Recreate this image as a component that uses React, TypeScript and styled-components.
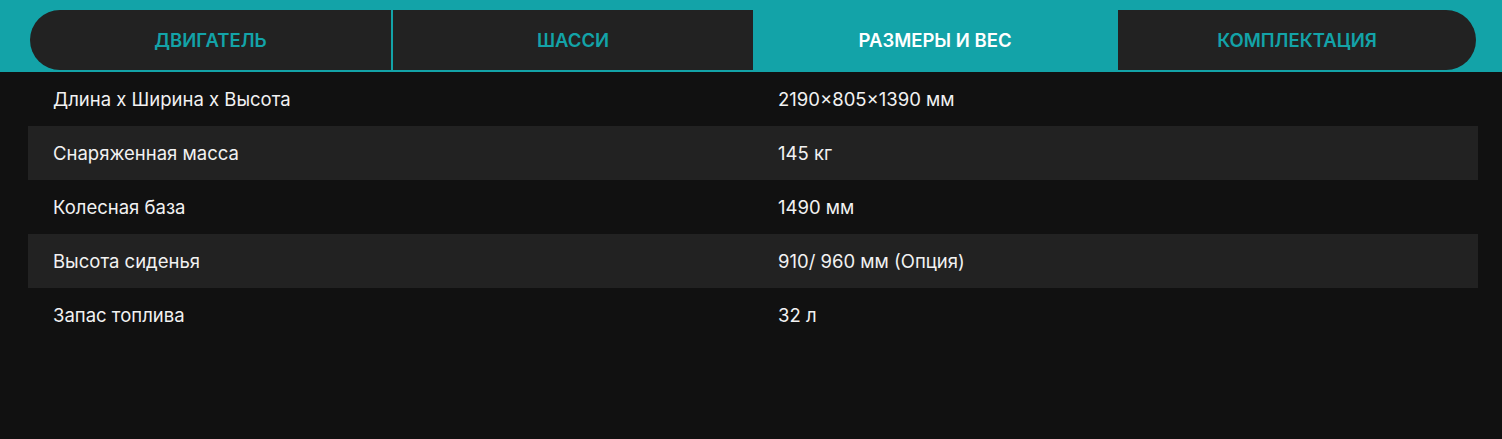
import React, { useState } from 'react';
import styled, { createGlobalStyle } from 'styled-components';

const GlobalStyle = createGlobalStyle`
  html, body {
    margin: 0;
    padding: 0;
    background: #111111;
  }
  body {
    font-family: Inter, Roboto, "Liberation Sans", sans-serif;
    -webkit-font-smoothing: antialiased;
  }
`;

const TEAL = '#13a3a8';

const Page = styled.div`
  width: 1502px;
  min-height: 439px;
  background: #111111;
`;

const TabBar = styled.div`
  background: ${TEAL};
  padding: 10px 26px 2px 30px;
`;

const Tabs = styled.div`
  display: grid;
  grid-template-columns: 361px 2px 360px 364px 1px 358px;
  height: 60px;
`;

const Sep = styled.div`
  background: ${TEAL};
`;

const Tab = styled.button<{ $active?: boolean; $first?: boolean; $last?: boolean }>`
  all: unset;
  box-sizing: border-box;
  display: flex;
  align-items: center;
  justify-content: center;
  cursor: pointer;
  background: ${p => (p.$active ? TEAL : '#222222')};
  color: ${p => (p.$active ? '#ffffff' : TEAL)};
  font-family: Inter, Roboto, "Liberation Sans", sans-serif;
  font-size: 18.5px;
  font-weight: 600;
  text-transform: uppercase;
  border-radius: ${p => (p.$first ? '30px 0 0 30px' : p.$last ? '0 30px 30px 0' : '0')};
`;

const Table = styled.div`
  padding: 0 24px 0 28px;
`;

const Row = styled.div<{ $striped: boolean }>`
  display: grid;
  grid-template-columns: 1fr 1fr;
  height: 54px;
  align-items: center;
  background: ${p => (p.$striped ? '#222222' : 'transparent')};
`;

const Cell = styled.div`
  padding-left: 25px;
  color: #f2f2f2;
  font-size: 18.5px;
  font-weight: 400;
`;

const tabs = ['Двигатель', 'Шасси', 'Размеры и вес', 'Комплектация'];

const specs: [string, string][] = [
  ['Длина х Ширина х Высота', '2190×805×1390 мм'],
  ['Снаряженная масса', '145 кг'],
  ['Колесная база', '1490 мм'],
  ['Высота сиденья', '910/ 960 мм (Опция)'],
  ['Запас топлива', '32 л'],
];

export default function App() {
  const [active, setActive] = useState(2);

  return (
    <Page>
      <GlobalStyle />
      <TabBar>
        <Tabs>
          <Tab $first $active={active === 0} onClick={() => setActive(0)}>{tabs[0]}</Tab>
          <Sep />
          <Tab $active={active === 1} onClick={() => setActive(1)}>{tabs[1]}</Tab>
          <Tab $active={active === 2} onClick={() => setActive(2)}>{tabs[2]}</Tab>
          <Sep />
          <Tab $last $active={active === 3} onClick={() => setActive(3)}>{tabs[3]}</Tab>
        </Tabs>
      </TabBar>
      <Table>
        {specs.map(([name, value], i) => (
          <Row key={name} $striped={i % 2 === 1}>
            <Cell>{name}</Cell>
            <Cell>{value}</Cell>
          </Row>
        ))}
      </Table>
    </Page>
  );
}
